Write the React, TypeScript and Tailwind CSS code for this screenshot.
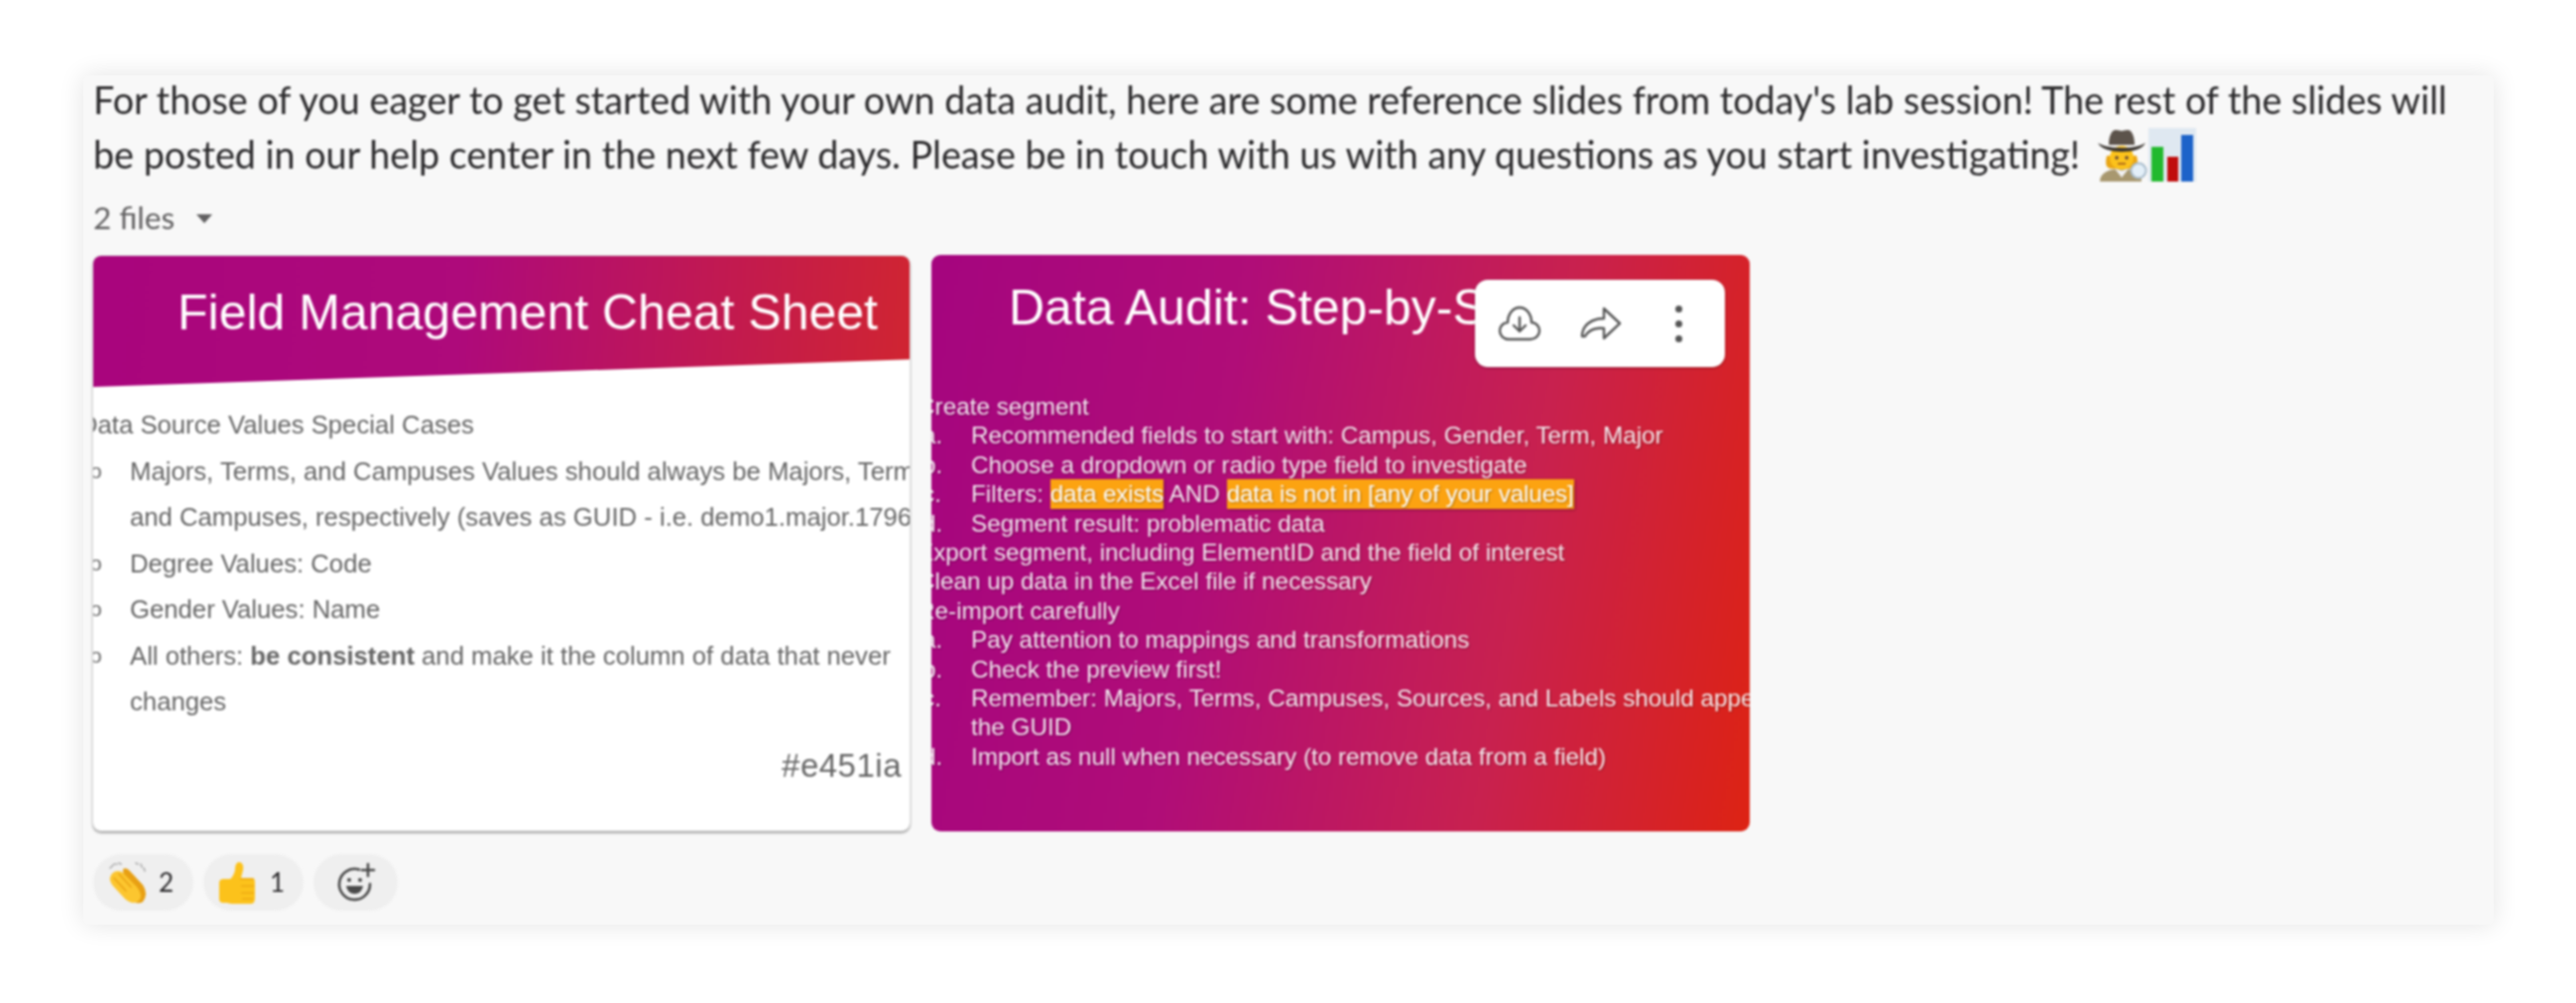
const bullets = [
  { lines: ["Majors, Terms, and Campuses Values should always be Majors, Terms", "and Campuses, respectively (saves as GUID - i.e. demo1.major.1796"] },
  { lines: ["Degree Values: Code"] },
  { lines: ["Gender Values: Name"] },
];

const mark = "inline-block bg-[#fca311] tracking-[-0.15px] text-white shadow-[1px_1px_3px_rgba(0,0,0,0.3)]";

const steps: { label: string; text: React.ReactNode; top?: boolean }[] = [
  { label: "Create segment", text: null, top: true },
  { label: "a.", text: "Recommended fields to start with: Campus, Gender, Term, Major" },
  { label: "b.", text: "Choose a dropdown or radio type field to investigate" },
  {
    label: "c.",
    text: (
      <>
        Filters: <span className={mark}>data exists</span> AND <span className={mark}>data is not in [any of your values]</span>
      </>
    ),
  },
  { label: "d.", text: "Segment result: problematic data" },
  { label: "Export segment, including ElementID and the field of interest", text: null, top: true },
  { label: "Clean up data in the Excel file if necessary", text: null, top: true },
  { label: "Re-import carefully", text: null, top: true },
  { label: "a.", text: "Pay attention to mappings and transformations" },
  { label: "b.", text: "Check the preview first!" },
  { label: "c.", text: "Remember: Majors, Terms, Campuses, Sources, and Labels should appear as" },
  { label: "", text: "the GUID" },
  { label: "d.", text: "Import as null when necessary (to remove data from a field)" },
];

const DetectiveEmoji = () => (
  <svg width="50" height="54" viewBox="0 0 50 54">
    <path d="M2 54c0-9 9-13 22-13s20 4 20 13z" fill="#a8986f" />
    <path d="M17 41l7 9 7-9-7 2z" fill="#f1f1f1" />
    <path d="M9 28c-2 8-1 13 5 13h20c6 0 7-5 5-13z" fill="#e8a413" />
    <circle cx="24" cy="30" r="12" fill="#fcc21b" />
    <circle cx="19" cy="30" r="1.700" fill="#5d4037" />
    <circle cx="29" cy="30" r="1.700" fill="#5d4037" />
    <path d="M20 36h8" stroke="#a8641a" strokeWidth="1.800" />
    <path d="M11 17c0-9 3-15 7-15 3 0 4 1 6 1s3-1 6-1c4 0 7 6 7 15z" fill="#5c534b" />
    <path d="M0 15c6 4 15 5 24 5s18-1 24-5c-3 6-12 9-24 9S3 21 0 15z" fill="#3a3530" />
    <circle cx="41" cy="43" r="7.500" fill="#e3eff8" stroke="#a9bccb" strokeWidth="2" />
  </svg>
);

const ChartEmoji = () => (
  <svg width="48" height="54" viewBox="0 0 48 54">
    <rect width="48" height="54" fill="#dfe8f1" />
    <rect x="3" y="19" width="12" height="35" fill="#22b92e" />
    <rect x="19" y="29" width="11" height="25" fill="#c00d0d" />
    <rect x="33" y="7" width="12" height="47" fill="#1d63c9" />
  </svg>
);

const ClapEmoji = () => (
  <svg width="44" height="46" viewBox="0 0 44 46">
    <path d="M4 8l3-3M8 4l3 0M13 3l2 1M30 3l2 1M35 4l1 3M38 8l1 3" stroke="#b0b0b0" strokeWidth="1.700" strokeLinecap="round" fill="none" />
    <path d="M17 9q3-2 6 1l14 15q6 9 0 17-3 2-7 1L18 24z" fill="#e8a013" />
    <path d="M5 15q4-6 11-3l15 15q7 9 2 14-6 5-14-2L7 26q-5-6-2-11z" fill="#fcc62f" />
    <path d="M8 18l12 13M13 14l12 13" stroke="#e8a013" strokeWidth="1.300" strokeLinecap="round" fill="none" />
  </svg>
);

const ThumbEmoji = () => (
  <svg width="38" height="44" viewBox="0 0 38 44">
    <path d="M1 22c0-3 2-4 4-4h7c2-1 4-5 5-9 0-4 1-8 4-8s5 3 4 8l-2 8h11c3 0 3 3 3 5v15c0 3-1 6-4 6H14c-3 0-4-1-5-1H5c-3 0-4-2-4-4z" fill="#fcc21b" />
    <path d="M22 18h14M23 25h13M23 32h13M24 38h11" stroke="#e59f10" strokeWidth="1.200" fill="none" />
  </svg>
);

const AddReactionIcon = () => (
  <svg width="42" height="42" viewBox="0 0 42 42" fill="none" stroke="#4a4a4a" strokeWidth="2.600" strokeLinecap="round">
    <path d="M24 7.500A15.500 15.500 0 1 0 35 22" />
    <path d="M33 2v12M27 8h12" />
    <circle cx="14" cy="18" r="2" fill="#4a4a4a" stroke="none" />
    <circle cx="25" cy="18" r="2" fill="#4a4a4a" stroke="none" />
    <path d="M11 24h17c-1 5-4 8-8.500 8S12 29 11 24z" fill="#4a4a4a" stroke="none" />
  </svg>
);

const CloudDownloadIcon = () => (
  <svg width="44" height="38" viewBox="0 0 44 38" fill="none" stroke="#555" strokeWidth="2.400" strokeLinecap="round" strokeLinejoin="round">
    <path d="M11 35h22c5 0 9-4 9-8.500 0-5-4-8.500-8-8.500 0-8-5-15-12-15S10 10 10 18c-4 0-8 3.500-8 8.500S6 35 11 35z" />
    <path d="M22 13v14M16 21l6 6 6-6" />
  </svg>
);

const ForwardIcon = () => (
  <svg width="42" height="36" viewBox="0 0 42 36" fill="none" stroke="#555" strokeWidth="2.400" strokeLinecap="round" strokeLinejoin="round">
    <path d="M2 31c0-10 8-18 22-18V3l16 15-16 15V23c-9-1-15 1-19 8z" />
  </svg>
);

export default function App() {
  return (
    <div className="min-h-[1011px] bg-white pl-[84px] pr-[83px] pt-[76px] font-['Lato',sans-serif]">
      <div className="h-[856px] rounded-md bg-[#f8f8f8] shadow-[0_0_26px_rgba(0,0,0,0.11)]">
        <div className="pl-[9px] blur-[0.8px]">
          <p className="ml-[1px] flex w-[2420px] flex-wrap items-center text-[37.700px] leading-[55px] text-[#2b2a2c]">
            <span className="-mt-[3px]">For those of you eager to get started with your own data audit, here are some reference slides from today's lab session! The rest of the slides will</span>
            <span>be posted in our help center in the next few days. Please be in touch with us with any questions as you start investigating!</span>
            <span className="ml-[18px] flex items-center gap-[1px]">
              <DetectiveEmoji />
              <ChartEmoji />
            </span>
          </p>

          <div className="ml-[1px] mt-[17px] flex h-[40px] items-center gap-[22px] text-[31.500px] text-[#616061]">
            <span>2 files</span>
            <span className="h-0 w-0 border-x-[8px] border-t-[9px] border-x-transparent border-t-[#616061]"></span>
          </div>

          <div className="mt-[17px] flex gap-[21px] font-['Liberation_Sans',sans-serif]">
            {/* first slide */}
            <div className="h-[581px] w-[825px] overflow-hidden rounded-[9px] border border-[#d9d9d9] bg-white shadow-[0_2px_2px_rgba(0,0,0,0.3)]">
              <div className="h-[132px] bg-[linear-gradient(95deg,#a9057d_0%,#ae0a7b_45%,#d02531_100%)] pl-[85px] pt-[29px] text-[50px] leading-[56px] whitespace-nowrap text-white [clip-path:polygon(0_0,100%_0,100%_79%,0_100%)]">
                Field Management Cheat Sheet
              </div>
              <div className="pt-[15px] text-[25.700px] leading-[46.500px] whitespace-nowrap text-[#666] blur-[0.5px]">
                <div className="ml-[-14px]">Data Source Values Special Cases</div>
                {bullets.map((b) => (
                  <div key={b.lines[0]} className="flex">
                    <span className="ml-[-3px] w-[40px] shrink-0 text-[21px]">o</span>
                    <div>
                      {b.lines.map((l) => (
                        <div key={l}>{l}</div>
                      ))}
                    </div>
                  </div>
                ))}
                <div className="flex">
                  <span className="ml-[-3px] w-[40px] shrink-0 text-[21px]">o</span>
                  <div>
                    <div>
                      All others: <b>be consistent</b> and make it the column of data that never
                    </div>
                    <div>changes</div>
                  </div>
                </div>
                <div className="pr-[8px] pt-[18px] text-right text-[33px] tracking-[0.5px] text-[#666]">#e451ia</div>
              </div>
            </div>

            {/* second slide */}
            <div className="relative h-[581px] w-[825px] overflow-hidden rounded-[9px] bg-[linear-gradient(100deg,#a5057f_0%,#b00d78_35%,#c8214f_70%,#dd2313_100%)]">
              <div className="pl-[78px] pt-[23px] text-[50px] leading-[60px] whitespace-nowrap text-white blur-[0.5px]">Data Audit: Step-by-Step</div>
              <div className="pt-[55px] text-[24.300px] leading-[29.400px] whitespace-nowrap text-white/90 blur-[0.6px] [text-shadow:1px_1px_2px_rgba(0,0,0,0.3)]">
                {steps.map((s, i) =>
                  s.top ? (
                    <div key={i} className="ml-[-14px]">
                      {s.label}
                    </div>
                  ) : (
                    <div key={i} className="flex">
                      <span className="ml-[-9px] w-[49px] shrink-0">{s.label}</span>
                      <span>{s.text}</span>
                    </div>
                  ),
                )}
              </div>

              <div className="absolute left-[548px] top-[25px] flex h-[88px] w-[252px] items-center rounded-[13px] bg-white shadow-[0_1px_3px_rgba(0,0,0,0.3)]">
                <div className="ml-[23px]">
                  <CloudDownloadIcon />
                </div>
                <div className="ml-[39px]">
                  <ForwardIcon />
                </div>
                <div className="ml-[54px] flex flex-col gap-[8px]">
                  <span className="h-[7px] w-[7px] rounded-full bg-[#555]"></span>
                  <span className="h-[7px] w-[7px] rounded-full bg-[#555]"></span>
                  <span className="h-[7px] w-[7px] rounded-full bg-[#555]"></span>
                </div>
              </div>
            </div>
          </div>

          <div className="ml-[1px] mt-[23px] flex gap-[10px]">
            <div className="flex h-[57px] w-[101px] items-center rounded-full bg-[#efefef] pl-[13px] text-[26px] text-[#2b2a2c]">
              <ClapEmoji />
              <span className="ml-[9px]">2</span>
            </div>
            <div className="flex h-[57px] w-[101px] items-center rounded-full bg-[#efefef] pl-[15px] text-[26px] text-[#2b2a2c]">
              <ThumbEmoji />
              <span className="ml-[14px]">1</span>
            </div>
            <div className="flex h-[57px] w-[85px] items-center justify-center rounded-full bg-[#efefef]">
              <AddReactionIcon />
            </div>
          </div>
        </div>
      </div>
    </div>
  );
}
